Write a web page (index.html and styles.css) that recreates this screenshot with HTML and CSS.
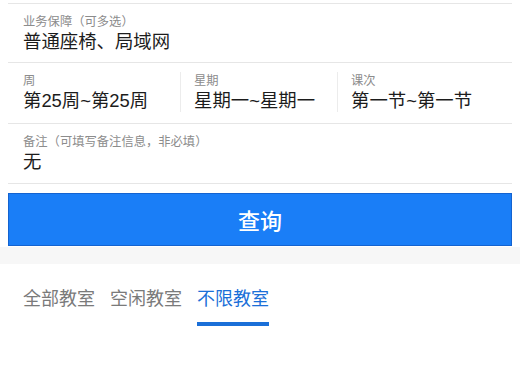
FILE: index.html
```html
<!DOCTYPE html>
<html lang="zh-CN">
<head>
<meta charset="utf-8">
<link rel="stylesheet" href="styles.css">
</head>
<body>
<div class="form">
  <div class="block block-first">
    <div class="label">业务保障（可多选）</div>
    <div class="value">普通座椅、局域网</div>
  </div>
  <div class="block block-row">
    <div class="cols">
      <div class="col">
        <div class="label">周</div>
        <div class="value">第25周~第25周</div>
      </div>
      <div class="col col-div">
        <div class="label">星期</div>
        <div class="value">星期一~星期一</div>
      </div>
      <div class="col col-div">
        <div class="label">课次</div>
        <div class="value">第一节~第一节</div>
      </div>
    </div>
  </div>
  <div class="block block-last">
    <div class="label">备注（可填写备注信息，非必填）</div>
    <div class="value">无</div>
  </div>
  <button class="btn">查询</button>
</div>
<div class="band"></div>
<div class="tabs">
  <div class="tab">全部教室</div>
  <div class="tab">空闲教室</div>
  <div class="tab active">不限教室</div>
</div>
</body>
</html>
```

FILE: styles.css
```css
html, body {
  margin: 0;
  padding: 0;
  background: #ffffff;
  font-family: "Liberation Sans", "Noto Sans CJK SC", sans-serif;
}

.form {
  padding: 3px 8px 0 8px;
}

.block {
  border-top: 1px solid #e6e6e6;
  padding: 9px 0 10px 15px;
}

.block-first {
  padding-bottom: 9px;
}

.block-last {
  border-bottom: 1px solid #e6e6e6;
}

.block-row {
  padding: 9px 0 11px 0;
}

.label {
  font-size: 12.3px;
  line-height: 18px;
  color: #8c8c8c;
}

.value {
  font-size: 18.4px;
  line-height: 22px;
  color: #1c1c1c;
}

.cols {
  display: grid;
  grid-template-columns: 172px 157px 1fr;
}

.col {
  padding-left: 15px;
}

.col-div {
  border-left: 1px solid #ececec;
  padding-left: 13px;
}

.btn {
  display: block;
  width: 100%;
  height: 53px;
  margin: 9px 0 0 0;
  padding: 0;
  background: #1a7ef7;
  border: 1px solid #1463d0;
  color: #ffffff;
  font-family: "Noto Sans CJK SC", sans-serif;
  font-size: 22px;
  font-weight: 500;
  line-height: 51px;
}

.band {
  height: 17px;
  margin-top: 1px;
  background: #f7f7f7;
}

.tabs {
  display: flex;
  gap: 15px;
  padding: 21px 0 0 23px;
}

.tab {
  font-family: "Noto Sans CJK SC", sans-serif;
  font-size: 18px;
  line-height: 24px;
  color: #7a7a7a;
  padding-bottom: 13px;
  border-bottom: 4px solid transparent;
}

.tab.active {
  color: #1a6fd8;
  border-bottom-color: #1a6fd8;
}
```
